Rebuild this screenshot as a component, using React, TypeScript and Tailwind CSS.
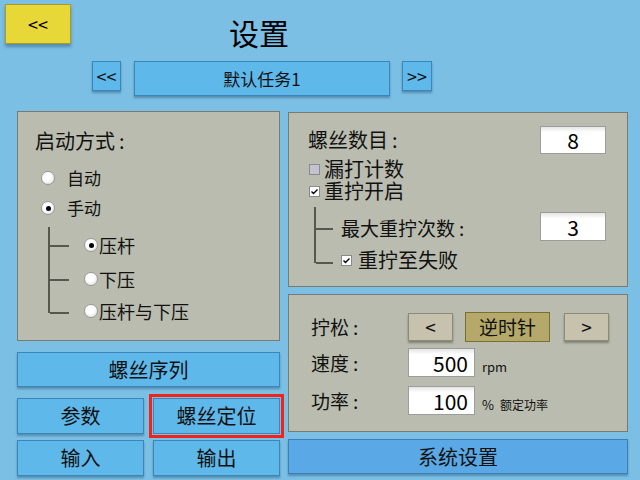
import React from "react";

const FONT = { fontFamily: '"Noto Sans CJK SC", "Noto Sans", sans-serif' };

function Colon() {
  return <span className="ml-[4px]">:</span>;
}

function Radio({ checked }: { checked?: boolean }) {
  return (
    <span className="flex h-[14px] w-[14px] shrink-0 items-center justify-center rounded-full border border-[#9a9a9a] bg-[radial-gradient(circle_at_40%_35%,#ffffff_40%,#d8d8d8_100%)]">
      {checked && <span className="h-[5px] w-[5px] rounded-full bg-black" />}
    </span>
  );
}

function Check({ checked, grey }: { checked?: boolean; grey?: boolean }) {
  return (
    <span
      className={
        "flex h-[11px] w-[11px] shrink-0 items-center justify-center border border-[#8a8a8a] " +
        (grey ? "bg-[#c4c2d0]" : "bg-white")
      }
    >
      {checked && (
        <svg width="9" height="9" viewBox="0 0 9 9">
          <path d="M1.5 4.5 L3.5 6.5 L7.5 2.5" fill="none" stroke="#000" strokeWidth="1.4" />
        </svg>
      )}
    </span>
  );
}

function BlueBtn({ children, className }: { children: React.ReactNode; className?: string }) {
  return (
    <div
      className={
        "flex items-center justify-center border border-[#3b86b8] bg-[#5fb8ea] text-[20px] leading-[26px] text-[#111] shadow-[0_2px_2px_rgba(40,80,110,0.45)] " +
        (className || "")
      }
    >
      {children}
    </div>
  );
}

function Input({ value, className }: { value: string; className?: string }) {
  return (
    <div
      className={
        "flex items-center border border-[#9c9c9c] bg-[linear-gradient(#e4e4e4,#ffffff_20%)] text-[21px] leading-[26px] text-black " +
        (className || "")
      }
    >
      {value}
    </div>
  );
}

export default function App() {
  return (
    <div className="h-[480px] w-[640px] overflow-hidden bg-[#7bbfe5] text-[#111]" style={FONT}>
      {/* header row 1 */}
      <div className="flex h-[61px] items-start">
        <div className="ml-[5px] mt-[4px] flex h-[40px] w-[66px] items-center justify-center border border-[#a99a2a] bg-[#e7d737] text-[18px] text-black shadow-[0_3px_3px_rgba(40,80,110,0.45)]">
          &lt;&lt;
        </div>
        <div className="ml-[158px] mt-[11px] text-[30px] leading-[42px] text-black">设置</div>
      </div>
      {/* header row 2 */}
      <div className="flex h-[50px] items-start">
        <BlueBtn className="ml-[92px] h-[30px] w-[29px] !text-[18px]">&lt;&lt;</BlueBtn>
        <BlueBtn className="ml-[13px] h-[35px] w-[256px] !text-[17px]">默认任务1</BlueBtn>
        <BlueBtn className="ml-[12px] h-[30px] w-[30px] !text-[18px]">&gt;&gt;</BlueBtn>
      </div>

      <div className="flex">
        {/* left column */}
        <div className="ml-[17px] flex w-[263px] flex-col">
          <div className="h-[230px] border border-[#7a7a70] bg-[#b9bcae]">
            <div className="ml-[17px] mt-[16px] text-[20px] leading-[26px]">
              启动方式<Colon />
            </div>
            <div className="ml-[23px] mt-[13px] flex h-[22px] items-center gap-[12px] text-[17px] leading-[22px]">
              <Radio />
              <span>自动</span>
            </div>
            <div className="ml-[23px] mt-[8px] flex h-[22px] items-center gap-[12px] text-[17px] leading-[22px]">
              <Radio checked />
              <span>手动</span>
            </div>
            <div className="ml-[30px] mt-[8px] flex">
              <div className="h-[86px] w-[2px] bg-[#55584e]" />
              <div className="flex flex-col">
                <div className="mt-[18px] h-[2px] w-[19px] bg-[#55584e]" />
                <div className="mt-[32px] h-[2px] w-[19px] bg-[#55584e]" />
                <div className="mt-[31px] h-[2px] w-[19px] bg-[#55584e]" />
              </div>
              <div className="ml-[15px] flex flex-col text-[18px] leading-[22px]">
                <div className="mt-[7px] flex h-[22px] items-center gap-[1px]">
                  <Radio checked />
                  <span>压杆</span>
                </div>
                <div className="mt-[12px] flex h-[22px] items-center gap-[1px]">
                  <Radio />
                  <span>下压</span>
                </div>
                <div className="mt-[10px] flex h-[22px] items-center gap-[1px]">
                  <Radio />
                  <span>压杆与下压</span>
                </div>
              </div>
            </div>
          </div>
          <BlueBtn className="mt-[11px] h-[35px] w-full">螺丝序列</BlueBtn>
          <div className="mt-[11px] flex gap-[9px]">
            <BlueBtn className="h-[36px] w-[127px]">参数</BlueBtn>
            <div className="-m-[4px] border-[3px] border-[#f02418] p-[1px]">
              <BlueBtn className="h-[36px] w-[127px] !shadow-none">螺丝定位</BlueBtn>
            </div>
          </div>
          <div className="mt-[6px] flex gap-[9px]">
            <BlueBtn className="h-[36px] w-[127px]">输入</BlueBtn>
            <BlueBtn className="h-[36px] w-[127px]">输出</BlueBtn>
          </div>
        </div>

        {/* right column */}
        <div className="ml-[8px] flex w-[340px] flex-col">
          <div className="mt-[1px] h-[175px] border border-[#7a7a70] bg-[#b9bcae]">
            <div className="mt-[13px] flex h-[28px] items-center">
              <span className="ml-[19px] text-[20px] leading-[28px]">
                螺丝数目<Colon />
              </span>
              <Input value="8" className="ml-auto mr-[21px] h-[28px] w-[66px] justify-center" />
            </div>
            <div className="ml-[20px] mt-[4px] flex h-[22px] items-center gap-[4px] text-[20px] leading-[22px]">
              <Check grey />
              <span>漏打计数</span>
            </div>
            <div className="ml-[20px] mt-[0px] flex h-[22px] items-center gap-[4px] text-[20px] leading-[22px]">
              <Check checked />
              <span>重拧开启</span>
            </div>
            <div className="ml-[25px] flex">
              <div className="mt-[5px] h-[56px] w-[2px] bg-[#55584e]" />
              <div className="flex flex-col">
                <div className="mt-[26px] h-[2px] w-[17px] bg-[#55584e]" />
                <div className="mt-[32px] h-[2px] w-[17px] bg-[#55584e]" />
              </div>
              <div className="ml-[8px] flex flex-1 flex-col">
                <div className="mt-[10px] flex h-[29px] items-center">
                  <span className="mt-[2px] text-[19px] leading-[24px]">
                    最大重拧次数<Colon />
                  </span>
                  <Input value="3" className="ml-auto mr-[21px] h-[29px] w-[66px] justify-center" />
                </div>
                <div className="mt-[8px] flex h-[22px] items-center gap-[6px] text-[20px] leading-[22px]">
                  <Check checked />
                  <span>重拧至失败</span>
                </div>
              </div>
            </div>
          </div>

          <div className="mt-[7px] h-[138px] border border-[#7a7a70] bg-[#b9bcae]">
            <div className="mt-[17px] flex h-[30px] items-center">
              <span className="ml-[22px] w-[97px] text-[19px] leading-[26px]">
                拧松<Colon />
              </span>
              <div className="flex h-[28px] w-[45px] items-center justify-center border border-[#8c8a78] bg-[#c6c2ad] text-[19px] shadow-[0_2px_2px_rgba(60,60,50,0.45)]">
                &lt;
              </div>
              <div className="ml-[12px] flex h-[30px] w-[85px] items-center justify-center border border-[#7c6e30] bg-[#b4a86a] text-[19px]">
                逆时针
              </div>
              <div className="ml-[14px] flex h-[28px] w-[45px] items-center justify-center border border-[#8c8a78] bg-[#c6c2ad] text-[19px] shadow-[0_2px_2px_rgba(60,60,50,0.45)]">
                &gt;
              </div>
            </div>
            <div className="mt-[6px] flex h-[29px] items-center">
              <span className="ml-[22px] w-[97px] text-[19px] leading-[26px]">
                速度<Colon />
              </span>
              <Input value="500" className="h-[29px] w-[67px] justify-end pr-[6px]" />
              <span className="ml-[7px] mt-[8px] text-[13px]">rpm</span>
            </div>
            <div className="mt-[9px] flex h-[29px] items-center">
              <span className="ml-[22px] w-[97px] text-[19px] leading-[26px]">
                功率<Colon />
              </span>
              <Input value="100" className="h-[29px] w-[67px] justify-end pr-[6px]" />
              <span className="ml-[7px] mt-[8px] text-[13px]">%</span>
              <span className="ml-[6px] mt-[8px] text-[12px]">额定功率</span>
            </div>
          </div>

          <div className="mt-[7px] flex h-[35px] items-center justify-center border border-[#3b7fb5] bg-[#5aa9e6] text-[20px] shadow-[0_2px_2px_rgba(40,80,110,0.45)]">
            系统设置
          </div>
        </div>
      </div>
    </div>
  );
}
